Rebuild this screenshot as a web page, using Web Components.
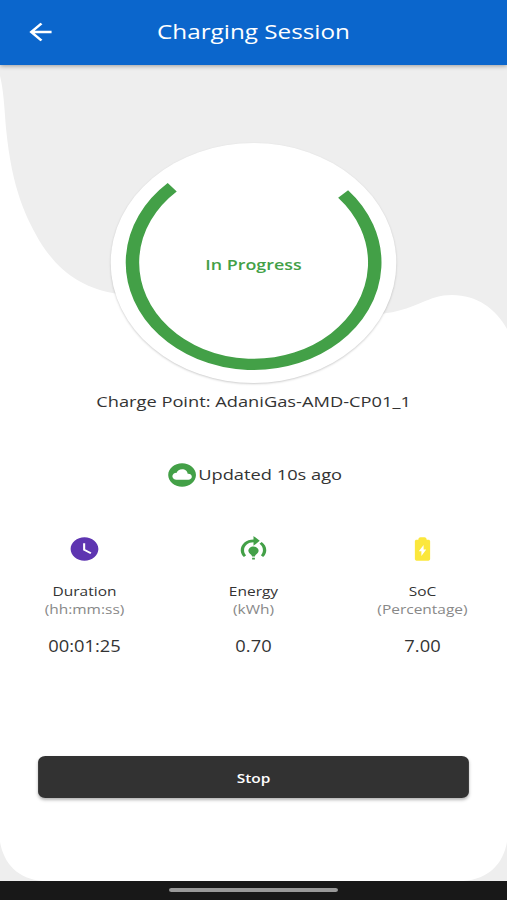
<!DOCTYPE html>
<html lang="en">
<head>
<meta charset="utf-8">
<meta name="viewport" content="width=device-width, initial-scale=1">
<title>Charging Session</title>
<style>
  html, body {
    margin: 0;
    height: 100%;
    overflow: hidden;
    background: #fff;
  }
</style>
</head>
<body>
<charging-screen>
  <app-bar slot="header">Charging Session</app-bar>
  <progress-dial>In Progress</progress-dial>
  <charge-info>
    Charge Point: AdaniGas-AMD-CP01_1
    <span slot="updated">Updated 10s ago</span>
  </charge-info>
  <stat-row>
    <stat-item icon="clock" label="Duration" unit="(hh:mm:ss)">00:01:25</stat-item>
    <stat-item icon="energy" label="Energy" unit="(kWh)">0.70</stat-item>
    <stat-item icon="battery" label="SoC" unit="(Percentage)">7.00</stat-item>
  </stat-row>
  <action-button>Stop</action-button>
  <nav-bar slot="footer"></nav-bar>
</charging-screen>

<script>
(() => {
  const ICONS = {
    back: 'M20 11H7.83l5.59-5.59L12 4l-8 8 8 8 1.41-1.41L7.83 13H20v-2z',
    cloud: 'M12 2C6.48 2 2 6.48 2 12s4.48 10 10 10 10-4.48 10-10S17.52 2 12 2zm4.5 14H8c-1.66 0-3-1.34-3-3s1.34-3 3-3l.14.01C8.58 8.28 10.13 7 12 7c2.21 0 4 1.79 4 4h.5c1.38 0 2.5 1.12 2.5 2.5S17.88 16 16.5 16z',
    clock: 'M12 2C6.5 2 2 6.5 2 12s4.5 10 10 10 10-4.5 10-10S17.5 2 12 2zm4.2 14.2L11 13V7h1.5v5.2l4.5 2.7-.8 1.3z',
    energy: 'M15.7 13.5c0 2-2.7 3.5-2.7 5h-2c0-1.5-2.7-3-2.7-5 0-2.04 1.66-3.7 3.7-3.7s3.7 1.66 3.7 3.7zM13 19.5h-2V21h2v-1.5zM18.8 13c0 1.6-.6 3.1-1.5 4.3l1.6 1.6C20.3 17.3 21.2 15.23 21.2 13c0-2.8-1.3-5.3-3.3-7l-1.6 1.6C17.9 8.9 18.8 10.8 18.8 13zM16.5 5L12 .8v3.1c-5.1 0-9.2 4.1-9.2 9.1 0 2.3.9 4.3 2.3 5.9l1.6-1.6C5.7 16.2 5.2 14.7 5.2 13c0-3.8 3-6.8 6.8-6.8v3.1L16.5 5z',
    battery: 'M16.3 4H15c0-1.2-.6-2-1.6-2h-2.8C9.6 2 9 2.8 9 4H7.7C7 4 6.5 4.6 6.5 5.33v15.33C6.5 21.4 7 22 7.7 22h8.6c.7 0 1.2-.6 1.2-1.33V5.33C17.5 4.6 17 4 16.3 4zM11.2 18v-4H9.3l3.5-5.5v4h1.9L11.2 18z'
  };

  const COLORS = {
    clock: '#5e35b1',
    energy: '#43a047',
    battery: '#fbe73c'
  };

  /**
   * Attach an open shadow root filled from a template
   */
  const render = (el, html) => {
    const template = document.createElement('template');
    template.innerHTML = html;
    el.attachShadow({ mode: 'open' })
      .appendChild(template.content.cloneNode(true));
  };

  customElements.define('md-icon',
    /**
     * A single 24-unit icon
     */
    class MdIcon extends HTMLElement {
      connectedCallback () {
        render(this, `
          <style>
            :host { display: block; width: 28px; height: 28px; }
            svg { display: block; width: 100%; height: 100%; fill: currentColor; }
          </style>
          <svg viewBox="0 0 24 24"><path d="${ICONS[this.getAttribute('name')]}"/></svg>
        `);
      }
    }
  );

  customElements.define('charging-screen',
    class ChargingScreen extends HTMLElement {
      constructor () {
        super();
        render(this, `
          <style>
            :host {
              display: grid;
              grid-template-rows: 65px 816px 19px;
              width: 426px;
              height: 900px;
              transform: scaleX(1.19014);
              transform-origin: 0 0;
              font-family: "Open Sans", "Noto Sans", sans-serif;
              color: #333;
              background: #fff;
            }
            .backdrop, main { grid-area: 2 / 1; }
            .backdrop { width: 100%; height: 100%; background: #eee; }
            main {
              z-index: 1;
              display: flex;
              flex-direction: column;
              align-items: center;
              padding-top: 78px;
            }
            slot[name="header"] { display: block; grid-area: 1 / 1; z-index: 2; }
            slot[name="footer"] { display: block; grid-area: 3 / 1; z-index: 2; }
          </style>
          <slot name="header"></slot>
          <svg class="backdrop" viewBox="0 65 507 816" preserveAspectRatio="none">
            <path fill="#fff" d="M0 76C3 88 4 100 6 128C12 190 26 218 42 245C62 275 86 289 118 294C200 306 300 330 387 313C417 309 428 295 452 295C477 295 496 309 507 329V842C503 864 489 879 463 881H43C18 879 4 864 0 842Z"/>
          </svg>
          <main><slot></slot></main>
          <slot name="footer"></slot>
        `);
      }
    }
  );

  customElements.define('app-bar',
    /**
     * Top bar with back arrow and centered title
     */
    class AppBar extends HTMLElement {
      constructor () {
        super();
        render(this, `
          <style>
            :host {
              display: grid;
              grid-template-columns: 67px 1fr 67px;
              align-items: center;
              height: 65px;
              box-sizing: border-box;
              padding-bottom: 3px;
              background: #0b66cc;
              box-shadow: 0 1px 4px rgba(0, 0, 0, .35);
              color: #fff;
              font-size: 20.4px;
              line-height: 28px;
              text-align: center;
            }
            md-icon { justify-self: center; margin-top: 1px; }
            div { padding-bottom: 1px; }
          </style>
          <md-icon name="back"></md-icon>
          <div><slot></slot></div>
        `);
      }
    }
  );

  customElements.define('progress-dial',
    /**
     * Round card with an open progress ring
     */
    class ProgressDial extends HTMLElement {
      constructor () {
        super();
        render(this, `
          <style>
            :host {
              display: grid;
              place-items: center;
              flex: none;
              width: 240px;
              height: 240px;
              border-radius: 50%;
              background: #fff;
              box-shadow: 0 1px 2px rgba(0, 0, 0, .2);
              color: #43a047;
              font-size: 15px;
              font-weight: 600;
            }
            svg, div { grid-area: 1 / 1; }
            div { padding-top: 1px; }
          </style>
          <svg width="240" height="240" viewBox="0 0 240 240">
            <path d="M51.7 44.2A101.8 101.8 0 1 0 195.3 51" fill="none" stroke="#43a047" stroke-width="11.3"/>
          </svg>
          <div><slot></slot></div>
        `);
      }
    }
  );

  customElements.define('charge-info',
    /**
     * Charge point name and time of the last update
     */
    class ChargeInfo extends HTMLElement {
      constructor () {
        super();
        render(this, `
          <style>
            :host {
              display: flex;
              flex-direction: column;
              align-items: center;
              margin-top: 6px;
              font-size: 15.35px;
              line-height: 24px;
              white-space: nowrap;
            }
            .updated { display: flex; align-items: center; margin-top: 48px; }
            md-icon { color: #43a047; }
            slot[name="updated"] { display: block; padding-bottom: 2px; }
          </style>
          <div><slot></slot></div>
          <div class="updated">
            <md-icon name="cloud"></md-icon>
            <slot name="updated"></slot>
          </div>
        `);
      }
    }
  );

  customElements.define('stat-row',
    /**
     * Three equal columns
     */
    class StatRow extends HTMLElement {
      constructor () {
        super();
        render(this, `
          <style>
            :host {
              display: grid;
              grid-template-columns: repeat(3, 1fr);
              width: 100%;
              margin-top: 46px;
            }
          </style>
          <slot></slot>
        `);
      }
    }
  );

  customElements.define('stat-item',
    /**
     * Icon, label, unit and value
     */
    class StatItem extends HTMLElement {
      connectedCallback () {
        const icon = this.getAttribute('icon');
        render(this, `
          <style>
            :host {
              display: flex;
              flex-direction: column;
              align-items: center;
              font-size: 13px;
              line-height: 18px;
            }
            md-icon { color: ${COLORS[icon]}; margin-bottom: 19px; }
            .unit { color: #888; }
            .value { margin-top: 18px; font-size: 15.4px; line-height: 22px; }
          </style>
          <md-icon name="${icon}"></md-icon>
          <div>${this.getAttribute('label')}</div>
          <div class="unit">${this.getAttribute('unit')}</div>
          <div class="value"><slot></slot></div>
        `);
      }
    }
  );

  customElements.define('action-button',
    /**
     * Full width raised button
     */
    class ActionButton extends HTMLElement {
      constructor () {
        super();
        render(this, `
          <style>
            :host { display: block; width: 361.5px; margin-top: 98px; }
            button {
              display: block;
              width: 100%;
              height: 42px;
              padding: 0;
              border: 0;
              border-radius: 6px;
              background: #323232;
              box-shadow: 0 2px 3px rgba(0, 0, 0, .3);
              color: #fff;
              font: 600 13px/44px "Open Sans", "Noto Sans", sans-serif;
            }
          </style>
          <button type="button"><slot></slot></button>
        `);
      }
    }
  );

  customElements.define('nav-bar',
    /**
     * System gesture bar
     */
    class NavBar extends HTMLElement {
      constructor () {
        super();
        render(this, `
          <style>
            :host {
              display: flex;
              justify-content: center;
              height: 19px;
              box-sizing: border-box;
              padding-top: 7px;
              background: #181818;
            }
            div { width: 142px; height: 4px; border-radius: 2px; background: #999; }
          </style>
          <div></div>
        `);
      }
    }
  );
})();
</script>
</body>
</html>
